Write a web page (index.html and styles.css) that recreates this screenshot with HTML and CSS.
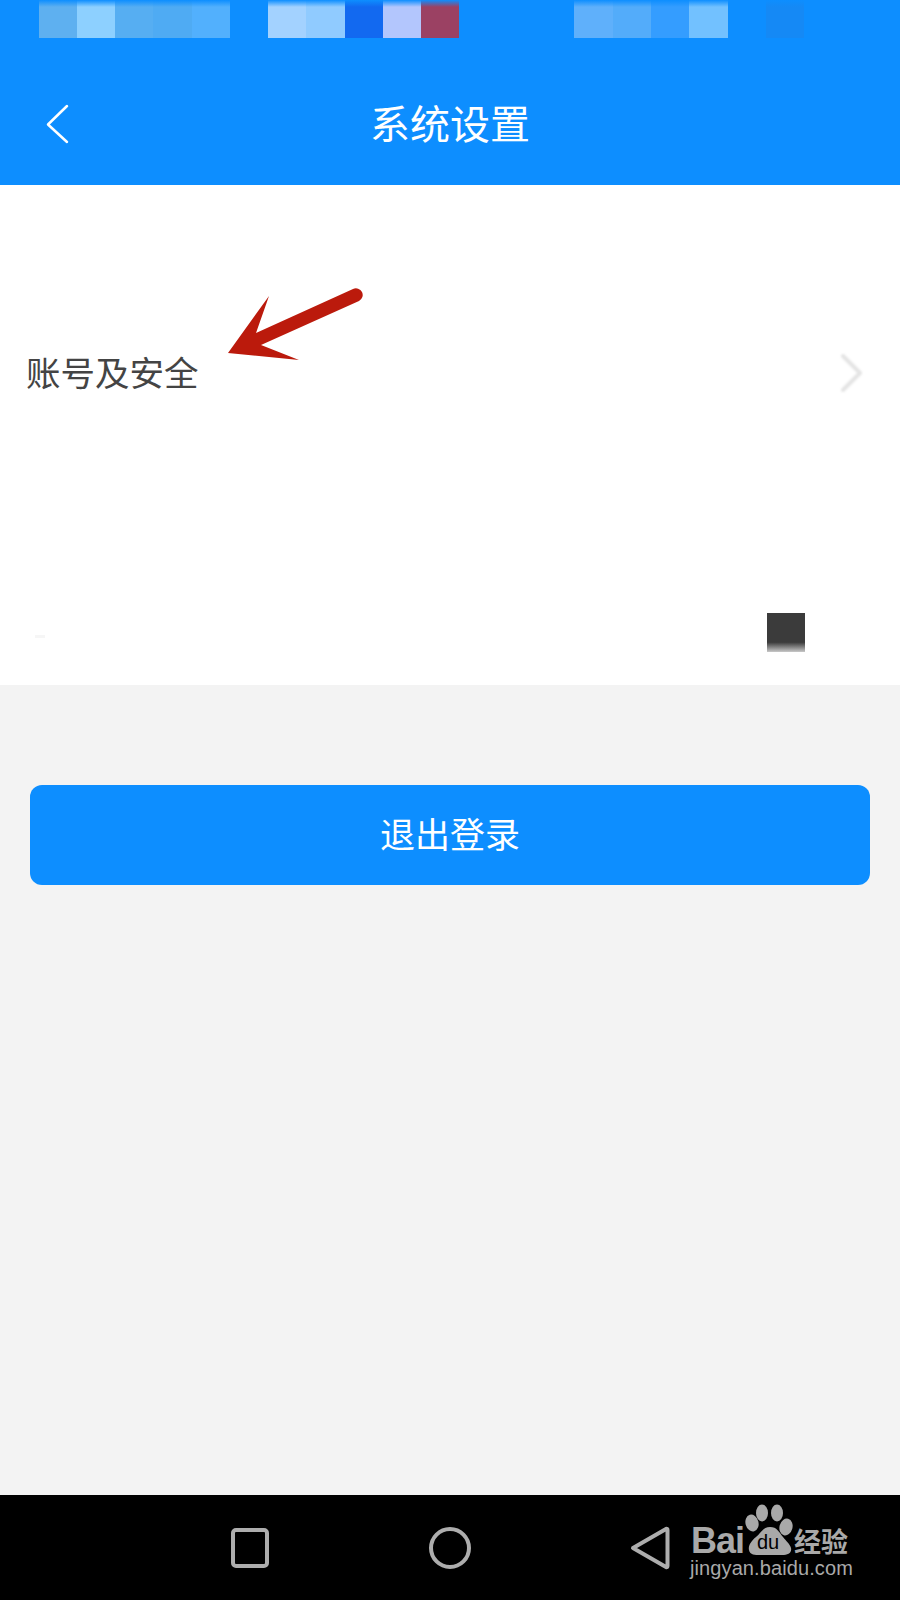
FILE: index.html
```html
<!DOCTYPE html>
<html lang="zh-CN">
<head>
  <meta charset="UTF-8">
  <meta name="viewport" content="width=device-width, initial-scale=1.0">
  <title>系统设置</title>
  <link rel="stylesheet" href="styles.css">
</head>
<body>
  <div class="page">
    <header class="header">
      <!-- status bar, pixelated in the screenshot -->
      <div class="status">
        <div class="mosaic">
          <span class="cell c1"></span><span class="cell c2"></span><span class="cell c3"></span><span class="cell c4"></span><span class="cell c5"></span>
        </div>
        <div class="mosaic">
          <span class="cell c6"></span><span class="cell c7"></span><span class="cell c8"></span><span class="cell c9"></span><span class="cell c10"></span>
        </div>
        <div class="mosaic">
          <span class="cell c11"></span><span class="cell c12"></span><span class="cell c13"></span><span class="cell c14"></span>
        </div>
        <div class="mosaic">
          <span class="cell c15"></span>
        </div>
      </div>
      <div class="titlebar">
        <svg class="back" width="30" height="48" viewBox="0 0 30 48">
          <path d="M24 6 L5 24.500 L24 42"/>
        </svg>
        <h1 class="title">系统设置</h1>
      </div>
    </header>

    <section class="list">
      <div class="row">
        <span class="row-label">账号及安全</span>
        <svg class="chevron" width="24" height="40" viewBox="0 0 24 40">
          <path d="M3 3 L20 20 L3 37"/>
        </svg>
        <!-- red arrow annotation -->
        <svg class="arrow" width="140" height="80" viewBox="225 285 140 80">
          <path d="M228 353 L269 296 L256 333 L353 289 A6.500 6.500 0 0 1 359 301 L261 345 L299 360 Z"/>
        </svg>
      </div>
      <div class="row-hidden">
        <span class="smudge"></span>
        <span class="block"></span>
      </div>
    </section>

    <main class="content">
      <button class="logout">退出登录</button>
    </main>

    <footer class="navbar">
      <div class="nav-item">
        <svg width="40" height="42" viewBox="0 0 40 42"><rect x="3" y="3" width="34" height="36" rx="3"/></svg>
      </div>
      <div class="nav-item">
        <svg width="44" height="44" viewBox="0 0 44 44"><circle cx="22" cy="22" r="19"/></svg>
      </div>
      <div class="nav-item">
        <svg width="44" height="48" viewBox="0 0 44 48"><path d="M5 24 L38 5 Q39.500 4.500 39.500 6 L39.500 42 Q39.500 43.500 38 43 Z"/></svg>
      </div>

      <!-- watermark -->
      <svg class="watermark" width="180" height="105" viewBox="680 1495 180 105">
        <text class="wm-bai" x="691" y="1553">Bai</text>
        <ellipse cx="752" cy="1523" rx="6.500" ry="8.500" transform="rotate(-15 752 1523)"/>
        <ellipse cx="762" cy="1513" rx="6" ry="8.500"/>
        <ellipse cx="777" cy="1513" rx="6" ry="8.500"/>
        <ellipse cx="786" cy="1527" rx="6.500" ry="8.500" transform="rotate(15 786 1527)"/>
        <path d="M770 1527 C763 1527 761 1533 756 1537 C751 1541 748 1546 749 1550 C750 1555 755 1555 760 1555 L782 1555 C788 1555 792 1553 791 1548 C790 1544 786 1541 783 1537 C779 1532 777 1527 770 1527 Z"/>
        <text class="wm-du" x="768" y="1549">du</text>
        <text class="wm-jy" x="794" y="1552">经验</text>
        <text class="wm-url" x="690" y="1575">jingyan.baidu.com</text>
      </svg>
    </footer>
  </div>
</body>
</html>
```

FILE: styles.css
```css
body {
  margin: 0;
  font-family: "Noto Sans CJK SC", "Liberation Sans", sans-serif;
}

.page {
  width: 900px;
  height: 1600px;
  display: flex;
  flex-direction: column;
  background: #f3f3f3;
}

/* header */
.header {
  height: 185px;
  background: #0d8eff;
}

.status {
  position: relative;
  height: 38px;
  display: flex;
  padding-left: 38.500px;
  gap: 38px;
}

/* soft top edge of the mosaic */
.status::after {
  content: "";
  position: absolute;
  left: 0;
  right: 0;
  top: 0;
  height: 7px;
  background: linear-gradient(to bottom, #0d8eff, rgba(13, 142, 255, 0));
}

.mosaic {
  display: flex;
}

.mosaic:nth-child(3) {
  margin-left: 77px;
}

.cell {
  width: 38.300px;
  height: 38px;
}

.c1 { background: #5eb0f0; }
.c2 { background: #8dd0ff; }
.c3 { background: #56aef2; }
.c4 { background: #4fabf3; }
.c5 { background: #52b0fd; }
.c6 { background: #a3d2ff; }
.c7 { background: #90cbff; }
.c8 { background: #1269f0; }
.c9 { background: #b3c6fd; }
.c10 { background: #9b4163; }
.c11 { background: #5fb0fb; }
.c12 { background: #53acfa; }
.c13 { background: #349dff; }
.c14 { background: #72c1ff; }
.c15 { background: #1589f5; }

.titlebar {
  position: relative;
  height: 147px;
  display: flex;
  align-items: center;
  justify-content: center;
}

.back {
  position: absolute;
  left: 43px;
  top: 62px;
  fill: none;
  stroke: #fff;
  stroke-width: 2.500;
  stroke-linecap: round;
  stroke-linejoin: round;
}

.title {
  margin: 0;
  color: #fff;
  font-size: 40px;
  font-weight: 400;
  line-height: 1;
  position: relative;
  top: 10px;
}

/* settings list */
.list {
  height: 500px;
  background: #fff;
}

.row {
  position: relative;
  height: 374px;
  display: flex;
  align-items: center;
  justify-content: space-between;
  padding: 0 36px 0 26px;
}

.row-label {
  color: #444;
  font-size: 34.500px;
  line-height: 1;
  position: relative;
  top: -1px;
}

.chevron {
  fill: none;
  stroke: #e4e4e4;
  stroke-width: 4;
  stroke-linecap: round;
  stroke-linejoin: round;
  filter: blur(0.800px);
  position: relative;
  top: 1px;
}

.arrow {
  position: absolute;
  left: 225px;
  top: 100px;
  fill: #bb1a0c;
}

.row-hidden {
  height: 126px;
  display: flex;
  justify-content: flex-end;
  align-items: flex-start;
  padding: 54px 95px 0 0;
  box-sizing: border-box;
  position: relative;
}

.smudge {
  position: absolute;
  left: 35px;
  top: 76px;
  width: 10px;
  height: 3px;
  background: #f6f6f6;
}

.block {
  width: 38px;
  height: 39px;
  background: linear-gradient(to bottom, #3b3b3b 75%, #c8c8c8 100%);
}

/* logout */
.content {
  flex: 1;
  padding: 100px 30px 0;
}

.logout {
  display: block;
  width: 100%;
  height: 100px;
  padding: 0 0 6px;
  border: 0;
  border-radius: 12px;
  background: #0d8eff;
  color: #fff;
  font-family: inherit;
  font-size: 35px;
}

/* android nav bar */
.navbar {
  position: relative;
  height: 105px;
  background: #000;
  display: grid;
  grid-template-columns: repeat(3, 200px);
  padding: 0 150px;
  align-items: center;
  justify-items: center;
}

.nav-item {
  display: flex;
}

.nav-item svg {
  fill: none;
  stroke: #adadad;
  stroke-width: 4;
  stroke-linejoin: round;
}

.watermark {
  position: absolute;
  right: 40px;
  top: 0;
  fill: #a9a9a9;
}

.watermark text {
  font-family: "Liberation Sans", sans-serif;
}

.watermark .wm-bai {
  font-size: 36px;
  font-weight: 700;
  letter-spacing: -1px;
}

.watermark .wm-du {
  fill: #000;
  font-size: 20px;
  text-anchor: middle;
}

.watermark .wm-jy {
  font-family: "Noto Sans CJK SC", sans-serif;
  font-size: 27px;
  font-weight: 700;
}

.watermark .wm-url {
  font-size: 20px;
  letter-spacing: 0.100px;
}
```
